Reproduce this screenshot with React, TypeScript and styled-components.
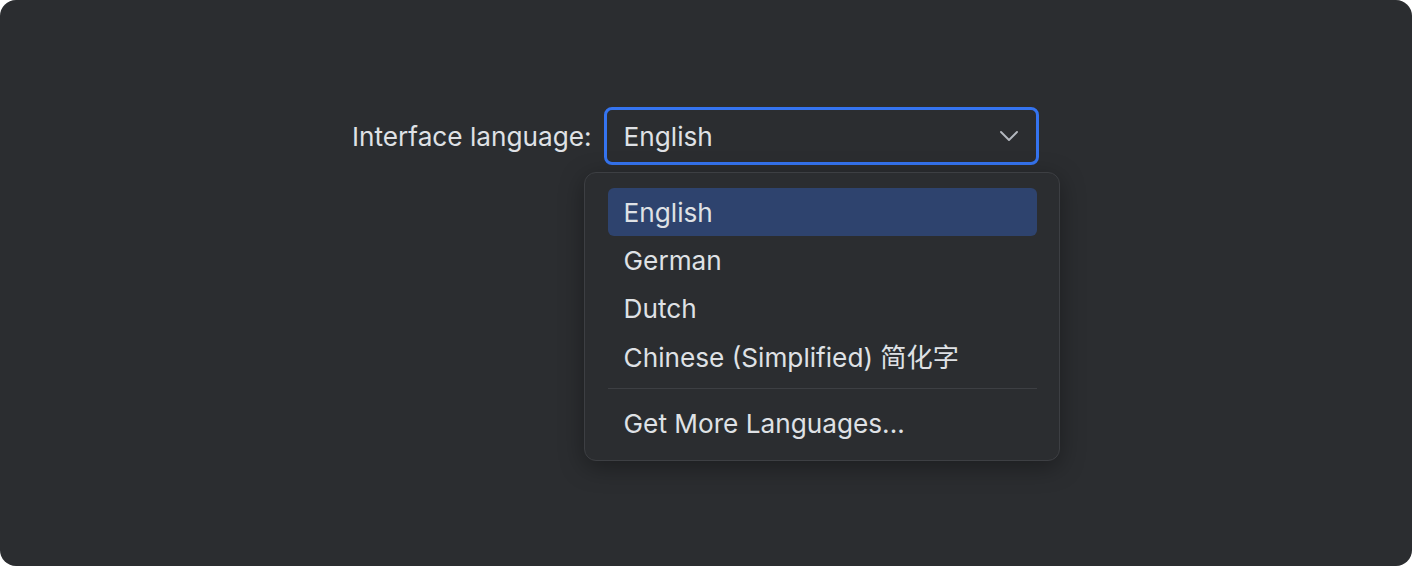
import React from "react";
import styled, { createGlobalStyle } from "styled-components";

const GlobalStyle = createGlobalStyle`
  html, body {
    margin: 0;
    padding: 0;
    background: #ffffff;
  }
  body {
    font-family: Inter, "Noto Sans", "Noto Sans CJK SC", sans-serif;
  }
`;

const Frame = styled.div`
  width: 1412px;
  height: 566px;
  box-sizing: border-box;
  background: #2b2d30;
  border-radius: 16px;
  padding: 107px 0 0 352px;
  color: #dfe1e5;
  font-size: 26.2px;
`;

const Row = styled.div`
  display: flex;
  align-items: flex-start;
  gap: 12px;
`;

const Label = styled.label`
  line-height: 59px;
`;

const SelectWrap = styled.div`
  position: relative;
`;

const SelectBox = styled.div`
  width: 435px;
  height: 58px;
  box-sizing: border-box;
  border: 3px solid #3574f0;
  border-radius: 8px;
  display: flex;
  align-items: center;
  justify-content: space-between;
  padding: 0 17px 0 17px;
`;

const Popup = styled.div`
  position: absolute;
  top: 65px;
  left: -20px;
  width: 476px;
  box-sizing: border-box;
  background: #2b2d30;
  border: 1px solid #3d3f43;
  border-radius: 12px;
  padding: 15px 22px 13px 23px;
  box-shadow: 0 6px 24px rgba(0, 0, 0, 0.35);
`;

const Item = styled.div<{ $selected?: boolean }>`
  height: 48px;
  display: flex;
  align-items: center;
  padding: 0 16px;
  border-radius: 6px;
  background: ${(p) => (p.$selected ? "#2e436e" : "transparent")};
`;

const Separator = styled.div`
  height: 1px;
  background: #3d3f43;
  margin: 8px 0 10px;
`;

function Chevron() {
  return (
    <svg width="20" height="20" viewBox="0 0 20 20" fill="none">
      <path
        d="M2 6L10 14L18 6"
        stroke="#b4b8bf"
        strokeWidth="1.9"
        strokeLinecap="round"
        strokeLinejoin="round"
      />
    </svg>
  );
}

const languages = ["English", "German", "Dutch", "Chinese (Simplified) 简化字"];

export default function App() {
  return (
    <>
      <GlobalStyle />
      <Frame>
        <Row>
          <Label>Interface language:</Label>
          <SelectWrap>
            <SelectBox>
              <span>English</span>
              <Chevron />
            </SelectBox>
            <Popup>
              {languages.map((l, i) => (
                <Item key={l} $selected={i === 0}>
                  {l}
                </Item>
              ))}
              <Separator />
              <Item>Get More Languages...</Item>
            </Popup>
          </SelectWrap>
        </Row>
      </Frame>
    </>
  );
}
